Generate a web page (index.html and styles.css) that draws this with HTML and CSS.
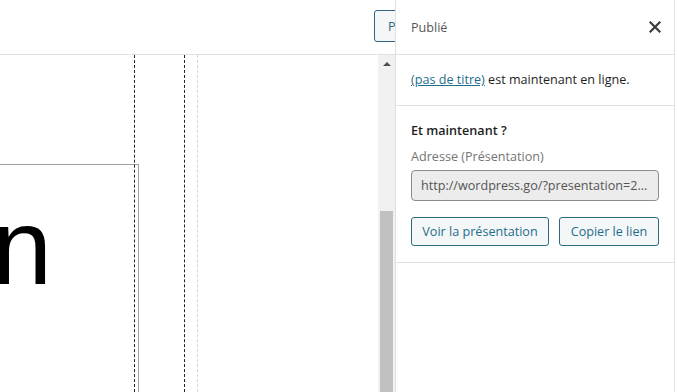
FILE: index.html
```html
<!DOCTYPE html>
<html lang="fr">
<head>
<meta charset="utf-8">
<title>Publié</title>
<link rel="stylesheet" href="styles.css">
</head>
<body>
<div class="app">
  <div class="main">
    <div class="topbar">
      <button class="publish-btn">Publier</button>
    </div>
    <div class="workspace">
      <div class="canvas">
        <div class="slide"><span class="slide-text">n</span></div>
        <div class="guide guide-a"></div>
        <div class="guide guide-b"></div>
        <div class="guide guide-c"></div>
      </div>
      <div class="scrollbar">
        <div class="scroll-arrow"><span class="tri"></span></div>
        <div class="scroll-space"></div>
        <div class="scroll-thumb"></div>
      </div>
    </div>
  </div>
  <aside class="sidebar">
    <div class="panel-header">
      <span class="panel-title">Publié</span>
      <svg class="close" width="12" height="12" viewBox="0 0 12 12" aria-hidden="true"><path d="M1.5 1.5L10.5 10.5M10.5 1.5L1.5 10.5" stroke="#3c3c3c" stroke-width="2.2" stroke-linecap="square"/></svg>
    </div>
    <div class="section">
      <p class="notice"><a class="link" href="#">(pas de titre)</a> est maintenant en ligne.</p>
    </div>
    <div class="section">
      <p class="section-title">Et maintenant ?</p>
      <p class="field-label">Adresse (Présentation)</p>
      <div class="field">http://wordpress.go/?presentation=2...</div>
      <div class="actions">
        <button class="btn btn-view">Voir la présentation</button>
        <button class="btn btn-copy">Copier le lien</button>
      </div>
    </div>
  </aside>
  <div class="edge"></div>
</div>
</body>
</html>
```
FILE: styles.css
```css
* { box-sizing: border-box; }
html, body { margin: 0; padding: 0; height: 100%; }
body {
  background: #fff;
  font-family: "Open Sans", "Noto Sans", sans-serif;
  overflow: hidden;
}
.app { display: flex; height: 392px; width: 677px; }
.main { width: 395px; display: flex; flex-direction: column; }
.topbar {
  height: 55px;
  border-bottom: 1px solid #e0e0e0;
  display: flex;
  justify-content: flex-end;
  align-items: flex-start;
  overflow: hidden;
}
.publish-btn {
  flex: none;
  margin-top: 10px;
  margin-right: -59px;
  width: 80px;
  height: 32px;
  padding: 0 13px;
  text-align: left;
  white-space: nowrap;
  border: 1px solid #2b6a80;
  border-radius: 3px;
  background: #f4f6f7;
  color: #2b6a80;
  font-family: inherit;
  font-size: 12.7px;
}
.workspace { flex: 1; display: flex; min-height: 0; }
.canvas { position: relative; flex: 1; overflow: hidden; }
.slide {
  margin-top: 109px;
  margin-left: -10px;
  width: 149px;
  height: 400px;
  border-top: 1px solid #a0a0a0;
  border-right: 1px solid #a0a0a0;
  overflow: hidden;
}
.slide-text {
  display: block;
  margin-left: 2px;
  margin-top: 28px;
  font-family: "Liberation Sans", Arial, sans-serif;
  font-size: 108px;
  line-height: 108px;
  color: #000;
}
.guide { position: absolute; top: 0; bottom: 0; width: 0; }
.guide-a { left: 134px; border-left: 1px dashed #222; }
.guide-b { left: 184px; border-left: 1px dashed #222; }
.guide-c { left: 197px; border-left: 1px dashed #d6d6d6; }
.scrollbar {
  width: 17px;
  background: #f1f1f1;
  display: flex;
  flex-direction: column;
}
.scroll-arrow { height: 17px; display: flex; justify-content: center; align-items: center; }
.tri {
  width: 0; height: 0;
  border-left: 4px solid transparent;
  border-right: 4px solid transparent;
  border-bottom: 4px solid #505050;
}
.scroll-space { height: 139px; }
.scroll-thumb { flex: 1; margin: 0 2px; background: #c1c1c1; }
.sidebar {
  width: 280px;
  border-left: 1px solid #e0e0e0;
  border-right: 1px solid #e0e0e0;
  display: flex;
  flex-direction: column;
  color: #1e1e1e;
  font-size: 12.6px;
}
.edge { flex: 1; }
.panel-header {
  height: 55px;
  border-bottom: 1px solid #e0e0e0;
  display: flex;
  align-items: center;
  justify-content: space-between;
  padding: 0 13px 0 15px;
}
.panel-title { color: #555; }
.close { display: block; }
.section { padding: 16px 15px; border-bottom: 1px solid #e0e0e0; }
p { margin: 0; line-height: 18px; }
.notice { color: #1e1e1e; }
.link { color: #1e6d8a; text-decoration: underline; }
.section-title { font-weight: 600; color: #1e1e1e; }
.field-label { margin-top: 8px; color: #757575; }
.field {
  margin-top: 4px;
  height: 31px;
  line-height: 29px;
  padding: 0 9px;
  border: 1px solid #8d8d8d;
  border-radius: 4px;
  background: #ececec;
  color: #555;
  white-space: nowrap;
  overflow: hidden;
}
.actions { display: flex; gap: 10px; margin-top: 16px; }
.btn {
  height: 29px;
  padding: 0;
  white-space: nowrap;
  border: 1px solid #2b6a80;
  border-radius: 3px;
  background: #f4f7f8;
  color: #1e6d8a;
  font-family: inherit;
  font-size: 12.6px;
}
.btn-view { width: 138px; }
.btn-copy { width: 100px; }
```
